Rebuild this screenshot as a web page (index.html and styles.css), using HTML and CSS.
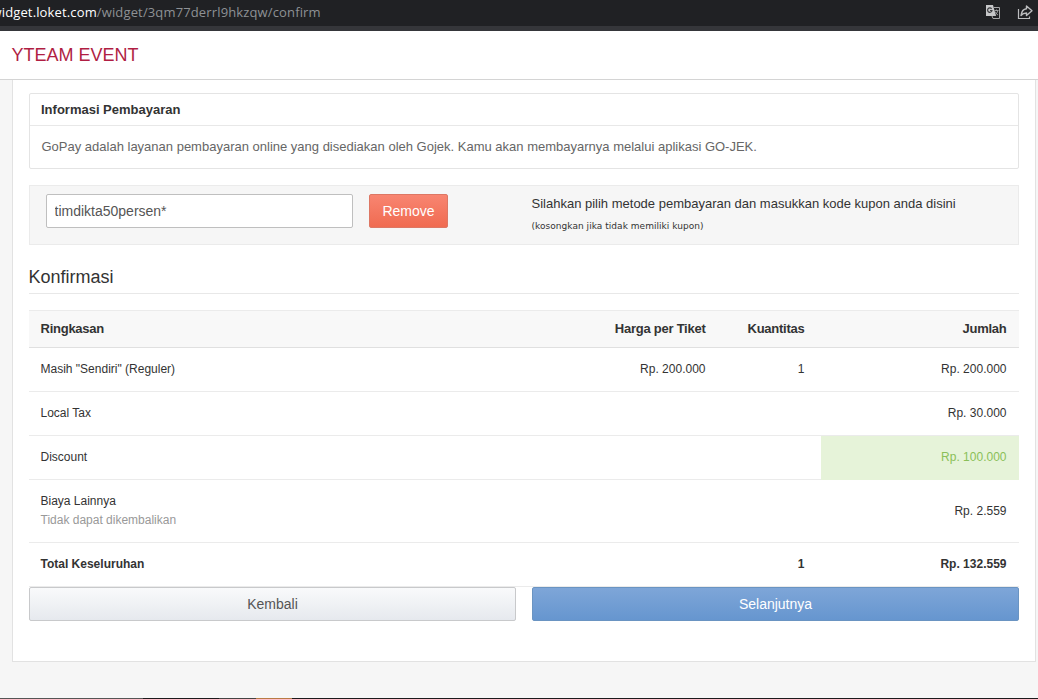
FILE: index.html
```html
<!DOCTYPE html>
<html lang="id">
<head>
  <meta charset="UTF-8">
  <meta name="viewport" content="width=device-width, initial-scale=1.0">
  <title>Yteam Event</title>
  <link rel="stylesheet" href="styles.css">
</head>
<body>
  <div class="browser-bar">
    <div class="url"><span class="host">widget.loket.com</span><span class="path">/widget/3qm77derrl9hkzqw/confirm</span></div>
    <div class="browser-icons">
      <svg width="16" height="16" viewBox="0 0 16 16">
        <path d="M1 1h7l3 11H1z" fill="#c6c7c9"/>
        <path d="M9 3.500h5.500v11H8L7 12" fill="none" stroke="#a5a6a8"/>
        <path d="M6.600 4.800A2.200 2.200 0 1 0 7 6.500H5" fill="none" stroke="#3a3b3e" stroke-width="1.200"/>
        <path d="M9.500 6.500h4M11.500 5.500v1M12.800 6.500c-.5 2-1.500 3.500-3 4.500M10 7.500c.5 1.500 1.500 2.500 3 3.500" fill="none" stroke="#a5a6a8" stroke-width=".9"/>
      </svg>
      <svg width="16" height="16" viewBox="0 0 16 16">
        <path d="M1.500 5v9.500h11v-2" fill="none" stroke="#bcbdbf" stroke-width="1.200"/>
        <path d="M9.500 2L15 6.800l-5.500 4.700V9C7 9 5.500 9.500 4 11.500 4.500 7.500 6.500 5 9.500 4.700z" fill="none" stroke="#bcbdbf" stroke-width="1.400" stroke-linejoin="round"/>
      </svg>
    </div>
  </div>

  <header class="header">
    <h1>YTEAM EVENT</h1>
  </header>

  <div class="container">
    <div class="panel">
      <div class="panel-heading">Informasi Pembayaran</div>
      <div class="panel-body">GoPay adalah layanan pembayaran online yang disediakan oleh Gojek. Kamu akan membayarnya melalui aplikasi GO-JEK.</div>
    </div>

    <form class="coupon">
      <div class="coupon-left">
        <input type="text" class="coupon-input" name="coupon" value="timdikta50persen*">
        <button type="button" class="btn btn-danger">Remove</button>
      </div>
      <div class="coupon-text">
        <p>Silahkan pilih metode pembayaran dan masukkan kode kupon anda disini</p>
        <small>(kosongkan jika tidak memiliki kupon)</small>
      </div>
    </form>

    <h2>Konfirmasi</h2>

    <table class="summary">
      <colgroup>
        <col>
        <col class="col-price">
        <col class="col-qty">
        <col class="col-total">
      </colgroup>
      <thead>
        <tr>
          <th>Ringkasan</th>
          <th>Harga per Tiket</th>
          <th>Kuantitas</th>
          <th>Jumlah</th>
        </tr>
      </thead>
      <tbody>
        <tr>
          <td>Masih "Sendiri" (Reguler)</td>
          <td>Rp. 200.000</td>
          <td>1</td>
          <td>Rp. 200.000</td>
        </tr>
        <tr>
          <td>Local Tax</td>
          <td></td>
          <td></td>
          <td>Rp. 30.000</td>
        </tr>
        <tr>
          <td>Discount</td>
          <td></td>
          <td></td>
          <td class="discount">Rp. 100.000</td>
        </tr>
        <tr class="fee">
          <td>Biaya Lainnya<br><span class="muted">Tidak dapat dikembalikan</span></td>
          <td></td>
          <td></td>
          <td>Rp. 2.559</td>
        </tr>
        <tr class="total">
          <td>Total Keseluruhan</td>
          <td></td>
          <td>1</td>
          <td>Rp. 132.559</td>
        </tr>
      </tbody>
    </table>

    <div class="actions">
      <button type="button" class="btn btn-default">Kembali</button>
      <button type="button" class="btn btn-primary">Selanjutnya</button>
    </div>
  </div>

  <div class="taskbar"></div>
</body>
</html>
```

FILE: styles.css
```css
* {
  box-sizing: border-box;
}
body {
  display: flex;
  flex-direction: column;
  height: 699px;
  margin: 0;
  overflow: hidden;
  background-color: #f6f6f6;
  color: #333;
  font-family: "Liberation Sans", Arial, sans-serif;
  font-size: 12px;
}
.browser-bar {
  display: flex;
  justify-content: space-between;
  height: 31px;
  flex: none;
  background-color: #202124;
  border-bottom: 5px solid #35363a;
  font-family: "Open Sans", "Noto Sans", sans-serif;
  font-size: 13px;
  line-height: 25px;
}
.url {
  margin-left: -8.5px;
  letter-spacing: 0.14px;
  white-space: nowrap;
}
.host {
  color: #fff;
}
.path {
  color: #8e9195;
}
.browser-icons {
  display: flex;
  gap: 16px;
  padding: 4px 5px 0 0;
}
.header {
  flex: none;
  height: 49px;
  padding-left: 11.5px;
  background-color: #fff;
  border-bottom: 1px solid #d4d4d4;
}
h1 {
  margin: 0;
  color: #b01e43;
  font-size: 18px;
  font-weight: normal;
  line-height: 48px;
}
.container {
  flex: none;
  width: 1024px;
  height: 582px;
  margin-left: 12px;
  padding: 13px 16px 0;
  background-color: #fff;
  border: 1px solid #e2e2e2;
  border-top: none;
}
.panel {
  height: 76px;
  border: 1px solid #e4e4e4;
  border-radius: 2px;
}
.panel-heading {
  height: 32px;
  padding-left: 11px;
  border-bottom: 1px solid #e8e8e8;
  font-size: 13px;
  font-weight: bold;
  line-height: 32px;
}
.panel-body {
  padding-left: 11.5px;
  color: #666;
  font-size: 13px;
  line-height: 42px;
}
.coupon {
  display: flex;
  height: 60px;
  margin-top: 16px;
  background-color: #f6f6f6;
  border: 1px solid #ebebeb;
}
.coupon-left {
  display: flex;
  gap: 16px;
  width: 501.5px;
  padding: 8px 0 0 16px;
}
.coupon-input {
  width: 307px;
  height: 34px;
  padding: 0 7.5px;
  border: 1px solid #bfbfbf;
  border-radius: 2px;
  color: #555;
  font-family: inherit;
  font-size: 14px;
}
.coupon-text p {
  margin: 9px 0 6px;
  font-size: 13px;
  line-height: 17px;
}
.coupon-text small {
  display: block;
  font-family: "DejaVu Sans", Verdana, sans-serif;
  font-size: 9px;
  letter-spacing: 0.04px;
  line-height: 16px;
}
h2 {
  height: 33px;
  margin: 16px 0;
  border-bottom: 1px solid #e8e8e8;
  font-size: 18px;
  font-weight: normal;
  line-height: 32px;
  text-indent: -0.5px;
}
.btn {
  height: 34px;
  padding: 0;
  border: 1px solid;
  border-radius: 2px;
  color: #fff;
  font-family: inherit;
  font-size: 14px;
}
.btn-danger {
  width: 79px;
  background-image: linear-gradient(#f88571, #f06b51);
  border-color: #dd7764;
}
.btn-default {
  background-image: linear-gradient(#f9fafb, #e6e9ee);
  border-color: #c8c9cb;
  color: #555;
}
.btn-primary {
  background-image: linear-gradient(#7ea6d8, #6696cf);
  border-color: #6a94c2;
}
.summary {
  width: 990px;
  table-layout: fixed;
  border-collapse: separate;
  border-spacing: 0;
}
.col-price {
  width: 160px;
}
.col-qty {
  width: 103px;
}
.col-total {
  width: 198px;
}
.summary th,
.summary td {
  height: 44px;
  padding: 0 12.5px 2px 11.5px;
  border-bottom: 1px solid #ebebeb;
  text-align: right;
}
.summary th {
  height: 38px;
  background-color: #f8f8f8;
  border-top: 1px solid #ebebeb;
  border-bottom-color: #e0e0e0;
  font-size: 13px;
  letter-spacing: -0.25px;
}
.summary th:first-child,
.summary td:first-child {
  text-align: left;
}
.summary th:nth-child(3),
.summary td:nth-child(3) {
  padding-right: 16.5px;
}
.summary .fee td {
  height: 63px;
  padding-bottom: 0;
  line-height: 19px;
}
.summary .total td {
  font-weight: bold;
}
.summary .discount {
  background-color: #e6f3d9;
  border-bottom-color: #e6f3d9;
  color: #8abf58;
}
.muted {
  color: #999;
}
.actions {
  display: grid;
  grid-template-columns: 1fr 1fr;
  gap: 16px;
}
.taskbar {
  flex: none;
  height: 1px;
  margin-top: auto;
  background: linear-gradient(to right, #555 143px, #1c1a1c 143px 219px, #444 219px 256px, #b87b45 256px 292px, #1c1a1c 292px);
}
```
